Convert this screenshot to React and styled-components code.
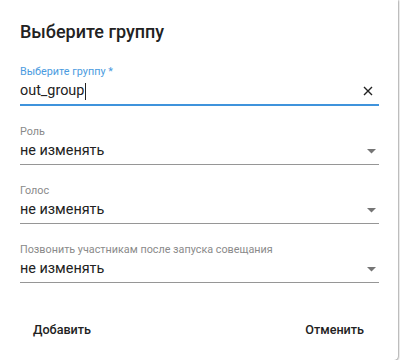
import React from 'react';
import styled, { createGlobalStyle } from 'styled-components';

const GlobalStyle = createGlobalStyle`
  html, body {
    margin: 0;
    padding: 0;
    background: #fff;
    font-family: Roboto, 'Liberation Sans', sans-serif;
  }
`;

const fields = [
  { label: 'Роль', value: 'не изменять' },
  { label: 'Голос', value: 'не изменять' },
  { label: 'Позвонить участникам после запуска совещания', value: 'не изменять' },
];

function CloseIcon() {
  return (
    <svg width="10" height="10" viewBox="0 0 10 10">
      <path d="M1 1 L9 9 M9 1 L1 9" stroke="#222" strokeWidth="1.4" />
    </svg>
  );
}

function CaretIcon() {
  return (
    <svg width="9" height="5" viewBox="0 0 9 5">
      <path d="M0 0 L9 0 L4.5 4.5 Z" fill="#757575" />
    </svg>
  );
}

function App() {
  return (
    <>
      <GlobalStyle />
      <Dialog>
        <Title>Выберите группу</Title>
        <Field>
          <Label focused>Выберите группу *</Label>
          <Control focused>
            <Value>out_group<Caret /></Value>
            <IconSlot><CloseIcon /></IconSlot>
          </Control>
        </Field>
        {fields.map((f) => (
          <Field key={f.label}>
            <Label>{f.label}</Label>
            <Control>
              <Value>{f.value}</Value>
              <IconSlot shift><CaretIcon /></IconSlot>
            </Control>
          </Field>
        ))}
        <Actions>
          <TextButton>Добавить</TextButton>
          <TextButton>Отменить</TextButton>
        </Actions>
      </Dialog>
    </>
  );
}

const Dialog = styled.div`
  width: 398px;
  height: 360px;
  box-sizing: border-box;
  padding: 20px 19px 0 20px;
  background: #fff;
  border-radius: 0 0 4px 0;
  box-shadow: 0 1px 2px rgba(0, 0, 0, 0.35), 1px 0 2px rgba(0, 0, 0, 0.25);
  display: flex;
  flex-direction: column;
`;

const Title = styled.h2`
  margin: 0 0 21px;
  font-size: 18px;
  line-height: 24px;
  font-weight: 500;
  color: #222;
`;

const Field = styled.div`
  display: flex;
  flex-direction: column;
  & + & {
    margin-top: 19px;
  }
`;

const Label = styled.div`
  font-size: 10.8px;
  line-height: 14px;
  color: ${(p) => (p.focused ? '#4a9be0' : '#8a8a8a')};
`;

const Control = styled.div`
  display: flex;
  align-items: center;
  height: 20px;
  padding: 2px 0 3px;
  border-bottom: ${(p) => (p.focused ? '2px solid #3f93dc' : '1px solid #969696')};
`;

const Value = styled.div`
  flex: 1;
  font-size: 14.4px;
  line-height: 20px;
  color: #222;
  display: flex;
  align-items: center;
`;

const Caret = styled.span`
  display: inline-block;
  width: 1px;
  height: 17px;
  background: #222;
  margin-left: 1px;
`;

const IconSlot = styled.div`
  width: 20px;
  display: flex;
  justify-content: center;
  align-items: center;
  margin-right: 1px;
  padding-left: ${(p) => (p.shift ? '6px' : '0')};
  box-sizing: border-box;
`;

const Actions = styled.div`
  display: flex;
  justify-content: space-between;
  margin-top: 28px;
  padding: 0 7px 0 5px;
`;

const TextButton = styled.button`
  border: none;
  background: transparent;
  height: 36px;
  padding: 0 8px;
  font-family: Roboto, 'Liberation Sans', sans-serif;
  font-size: 12.6px;
  font-weight: 500;
  color: #222;
  cursor: pointer;
`;

export default App;
